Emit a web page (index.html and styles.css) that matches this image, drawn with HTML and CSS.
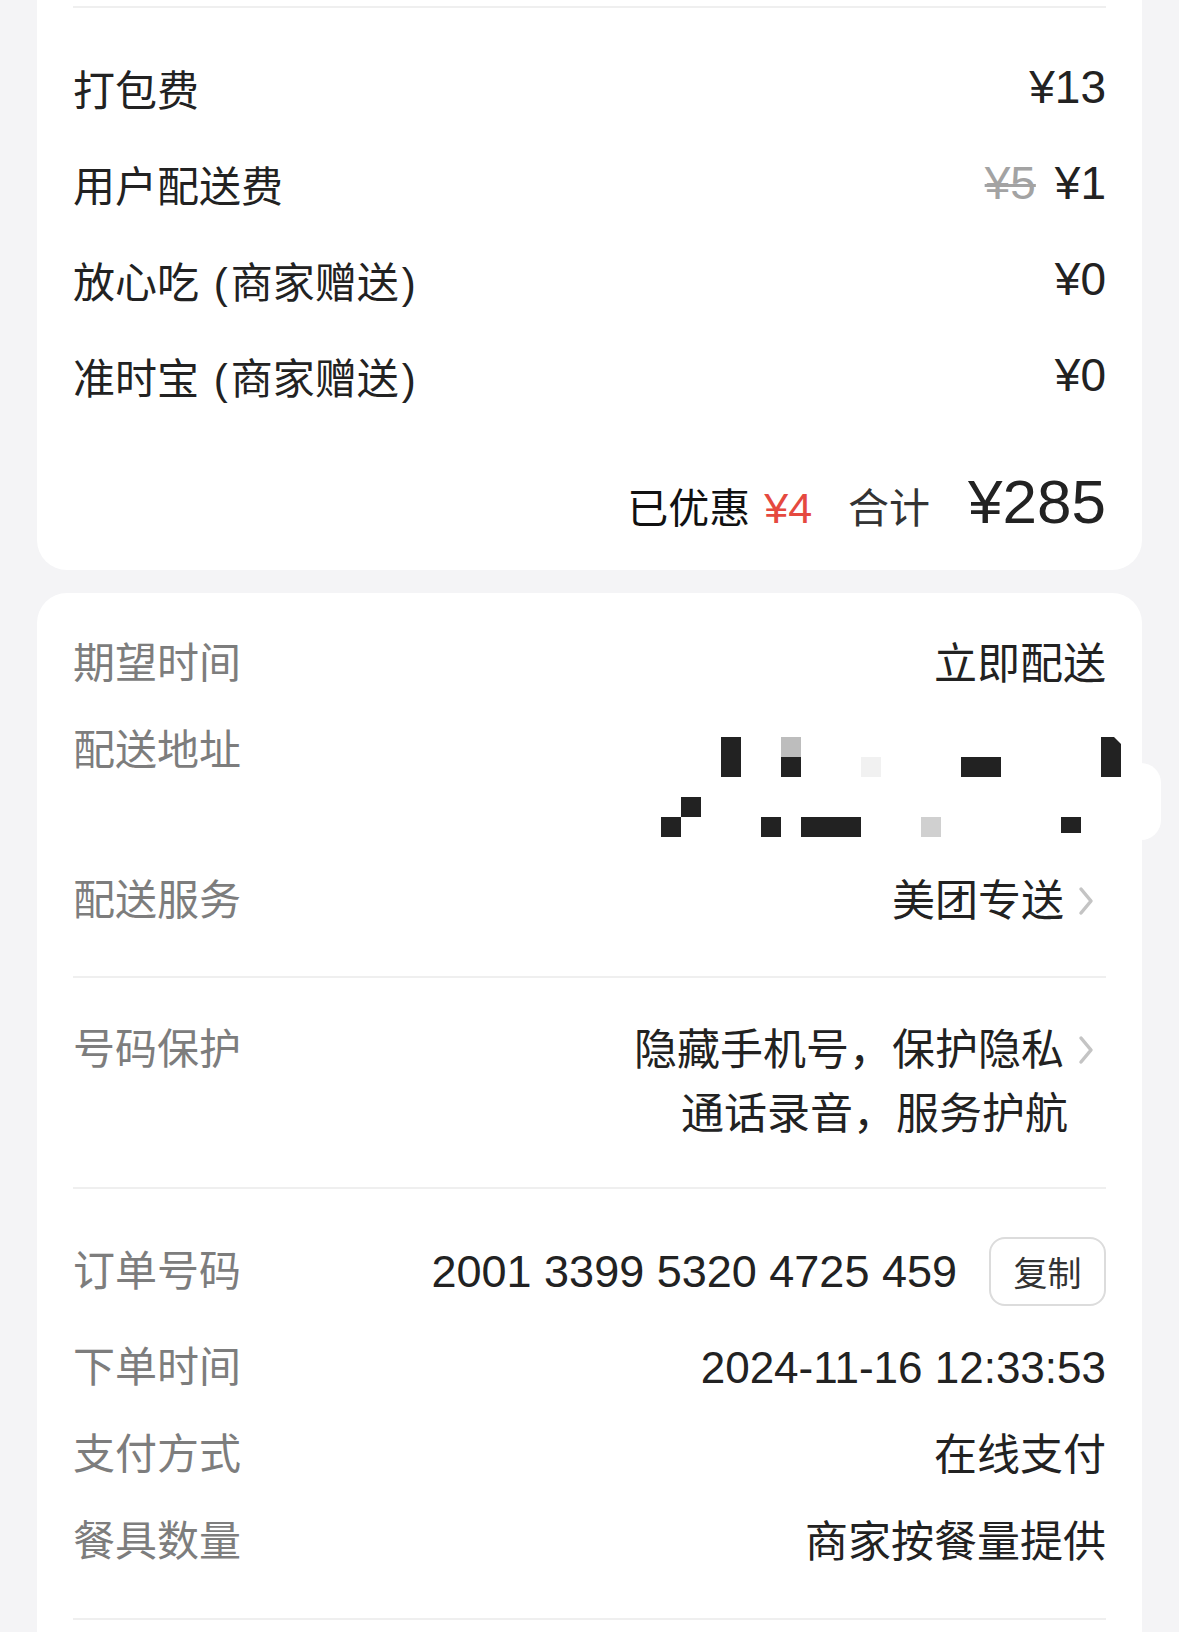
FILE: index.html
```html
<!DOCTYPE html>
<html lang="zh-CN">

<head>
    <meta charset="UTF-8">
    <meta name="viewport" content="width=device-width, initial-scale=1.0">
    <title>订单详情</title>
    <link rel="stylesheet" href="styles.css">
</head>

<body>
    <div class="page">
        <section class="card card-fees">
            <div class="divider"></div>
            <div class="fee-list">
                <div class="fee-row">
                    <span class="fee-label">打包费</span>
                    <span class="amount">¥13</span>
                </div>
                <div class="fee-row">
                    <span class="fee-label">用户配送费</span>
                    <span class="amount"><s class="old-price">¥5</s>¥1</span>
                </div>
                <div class="fee-row">
                    <span class="fee-label">放心吃 <span class="paren">(</span>商家赠送<span class="paren">)</span></span>
                    <span class="amount">¥0</span>
                </div>
                <div class="fee-row">
                    <span class="fee-label">准时宝 <span class="paren">(</span>商家赠送<span class="paren">)</span></span>
                    <span class="amount">¥0</span>
                </div>
            </div>
            <div class="total">
                <span class="saved">已优惠</span>
                <span class="saved-amount">¥4</span>
                <span class="total-label">合计</span>
                <span class="total-amount">¥285</span>
            </div>
        </section>

        <section class="card card-info">
            <div class="side-tab"></div>

            <div class="group">
                <div class="info-row">
                    <span class="label">期望时间</span>
                    <span class="value">立即配送</span>
                </div>
                <div class="info-row row-top">
                    <span class="label">配送地址</span>
                    <svg class="mosaic" width="460" height="100" viewBox="0 0 460 100">
                        <rect x="60" y="0" width="20" height="40" fill="#222"/>
                        <rect x="120" y="0" width="20" height="20" fill="#bdbdbd"/>
                        <rect x="120" y="20" width="20" height="20" fill="#222"/>
                        <rect x="200" y="20" width="20" height="20" fill="#f1f1f1"/>
                        <rect x="300" y="20" width="40" height="20" fill="#222"/>
                        <polygon points="440,0 453,0 460,7 460,40 440,40" fill="#222"/>
                        <rect x="20" y="60" width="20" height="20" fill="#222"/>
                        <rect x="0" y="80" width="20" height="20" fill="#222"/>
                        <rect x="100" y="80" width="20" height="20" fill="#222"/>
                        <rect x="140" y="80" width="60" height="20" fill="#222"/>
                        <rect x="260" y="80" width="20" height="20" fill="#d0d0d0"/>
                        <rect x="400" y="80" width="20" height="16" fill="#222"/>
                    </svg>
                </div>
                <div class="info-row">
                    <span class="label">配送服务</span>
                    <span class="value link">美团专送
                        <svg class="chevron" width="16" height="30" viewBox="0 0 16 30"><polyline points="3,3 13,15 3,27" fill="none" stroke="#c4c4c4" stroke-width="3.5" stroke-linecap="round" stroke-linejoin="round"/></svg>
                    </span>
                </div>
            </div>

            <div class="group">
                <div class="info-row row-top tall">
                    <span class="label">号码保护</span>
                    <div class="value-lines">
                        <span class="value link">隐藏手机号，保护隐私
                            <svg class="chevron" width="16" height="30" viewBox="0 0 16 30"><polyline points="3,3 13,15 3,27" fill="none" stroke="#c4c4c4" stroke-width="3.5" stroke-linecap="round" stroke-linejoin="round"/></svg>
                        </span>
                        <span class="value second-line">通话录音，服务护航</span>
                    </div>
                </div>
            </div>

            <div class="group">
                <div class="info-row order-row">
                    <span class="label">订单号码</span>
                    <span class="order-value">
                        <span class="value order-no">2001 3399 5320 4725 459</span>
                        <button class="copy-btn">复制</button>
                    </span>
                </div>
                <div class="info-row">
                    <span class="label">下单时间</span>
                    <span class="value num">2024-11-16 12:33:53</span>
                </div>
                <div class="info-row">
                    <span class="label">支付方式</span>
                    <span class="value">在线支付</span>
                </div>
                <div class="info-row">
                    <span class="label">餐具数量</span>
                    <span class="value">商家按餐量提供</span>
                </div>
            </div>

            <div class="group group-last"></div>
        </section>
    </div>
</body>

</html>
```

FILE: styles.css
```css
body {
    margin: 0;
    background-color: #f4f4f6;
    font-family: "Liberation Sans", "Noto Sans CJK SC", sans-serif;
    color: #222;
}

.page {
    height: 1632px;
    overflow: hidden;
}

.card {
    position: relative;
    margin: 0 37px;
    padding: 0 36px;
    background-color: #fff;
    border-radius: 30px;
}

/* first card is scrolled, its top lies above the window */
.card-fees {
    margin-top: -40px;
    padding-top: 46px;
    padding-bottom: 32px;
}

.divider {
    height: 2px;
    background-color: #efefef;
}

.fee-list {
    display: flex;
    flex-direction: column;
    gap: 38px;
    padding-top: 50px;
}

.fee-row {
    display: flex;
    justify-content: space-between;
    align-items: center;
    height: 58px;
    font-size: 42px;
}

.fee-label {
    color: #222;
}

.paren {
    display: inline-block;
    margin: 0 3px;
}

.amount {
    font-size: 46px;
    color: #222;
}

.old-price {
    margin-right: 19px;
    color: #a3a3a3;
    text-decoration-thickness: 3px;
}

.total {
    display: flex;
    justify-content: flex-end;
    align-items: baseline;
    height: 72px;
    margin-top: 62px;
}

.saved {
    font-size: 41px;
    color: #111;
}

.saved-amount {
    margin-left: 14px;
    font-size: 43px;
    color: #e5493f;
}

.total-label {
    margin-left: 36px;
    font-size: 41px;
    color: #333;
}

.total-amount {
    margin-left: 38px;
    font-size: 62px;
    color: #222;
}

.card-info {
    margin-top: 23px;
    padding-bottom: 200px;
}

.side-tab {
    position: absolute;
    top: 170px;
    right: -19px;
    width: 20px;
    height: 77px;
    background-color: #fff;
    border-radius: 0 20px 20px 0;
}

.group {
    display: flex;
    flex-direction: column;
    gap: 29px;
    padding: 42px 0 46px;
    border-bottom: 2px solid #efefef;
}

.group:nth-of-type(3) {
    padding: 40px 0 41px;
}

.group:nth-of-type(4) {
    padding: 48px 0 47px;
}

.group-last {
    border-bottom: none;
}

.info-row {
    display: flex;
    justify-content: space-between;
    align-items: center;
    min-height: 58px;
    font-size: 42px;
    line-height: 58px;
}

.row-top {
    align-items: flex-start;
}

.label {
    color: #7d7d7d;
}

.value {
    font-size: 43px;
    color: #222;
}

.num {
    font-size: 44px;
}

.order-no {
    font-size: 45px;
}

.link {
    display: flex;
    align-items: center;
}

.chevron {
    margin-left: 14px;
    margin-right: 12px;
}

.mosaic {
    display: block;
    margin-top: 15px;
    margin-bottom: 6px;
    margin-right: -15px;
}

.tall {
    line-height: 64px;
}

.value-lines {
    display: flex;
    flex-direction: column;
    align-items: flex-end;
}

.second-line {
    padding-right: 38px;
}

.order-row {
    margin-bottom: 4px;
}

.order-value {
    display: flex;
    align-items: center;
    gap: 32px;
}

.copy-btn {
    width: 117px;
    height: 69px;
    padding: 0;
    background-color: #fff;
    border: 2px solid #dcdcdc;
    border-radius: 16px;
    font-family: "Liberation Sans", "Noto Sans CJK SC", sans-serif;
    font-size: 34px;
    color: #333;
}
```
